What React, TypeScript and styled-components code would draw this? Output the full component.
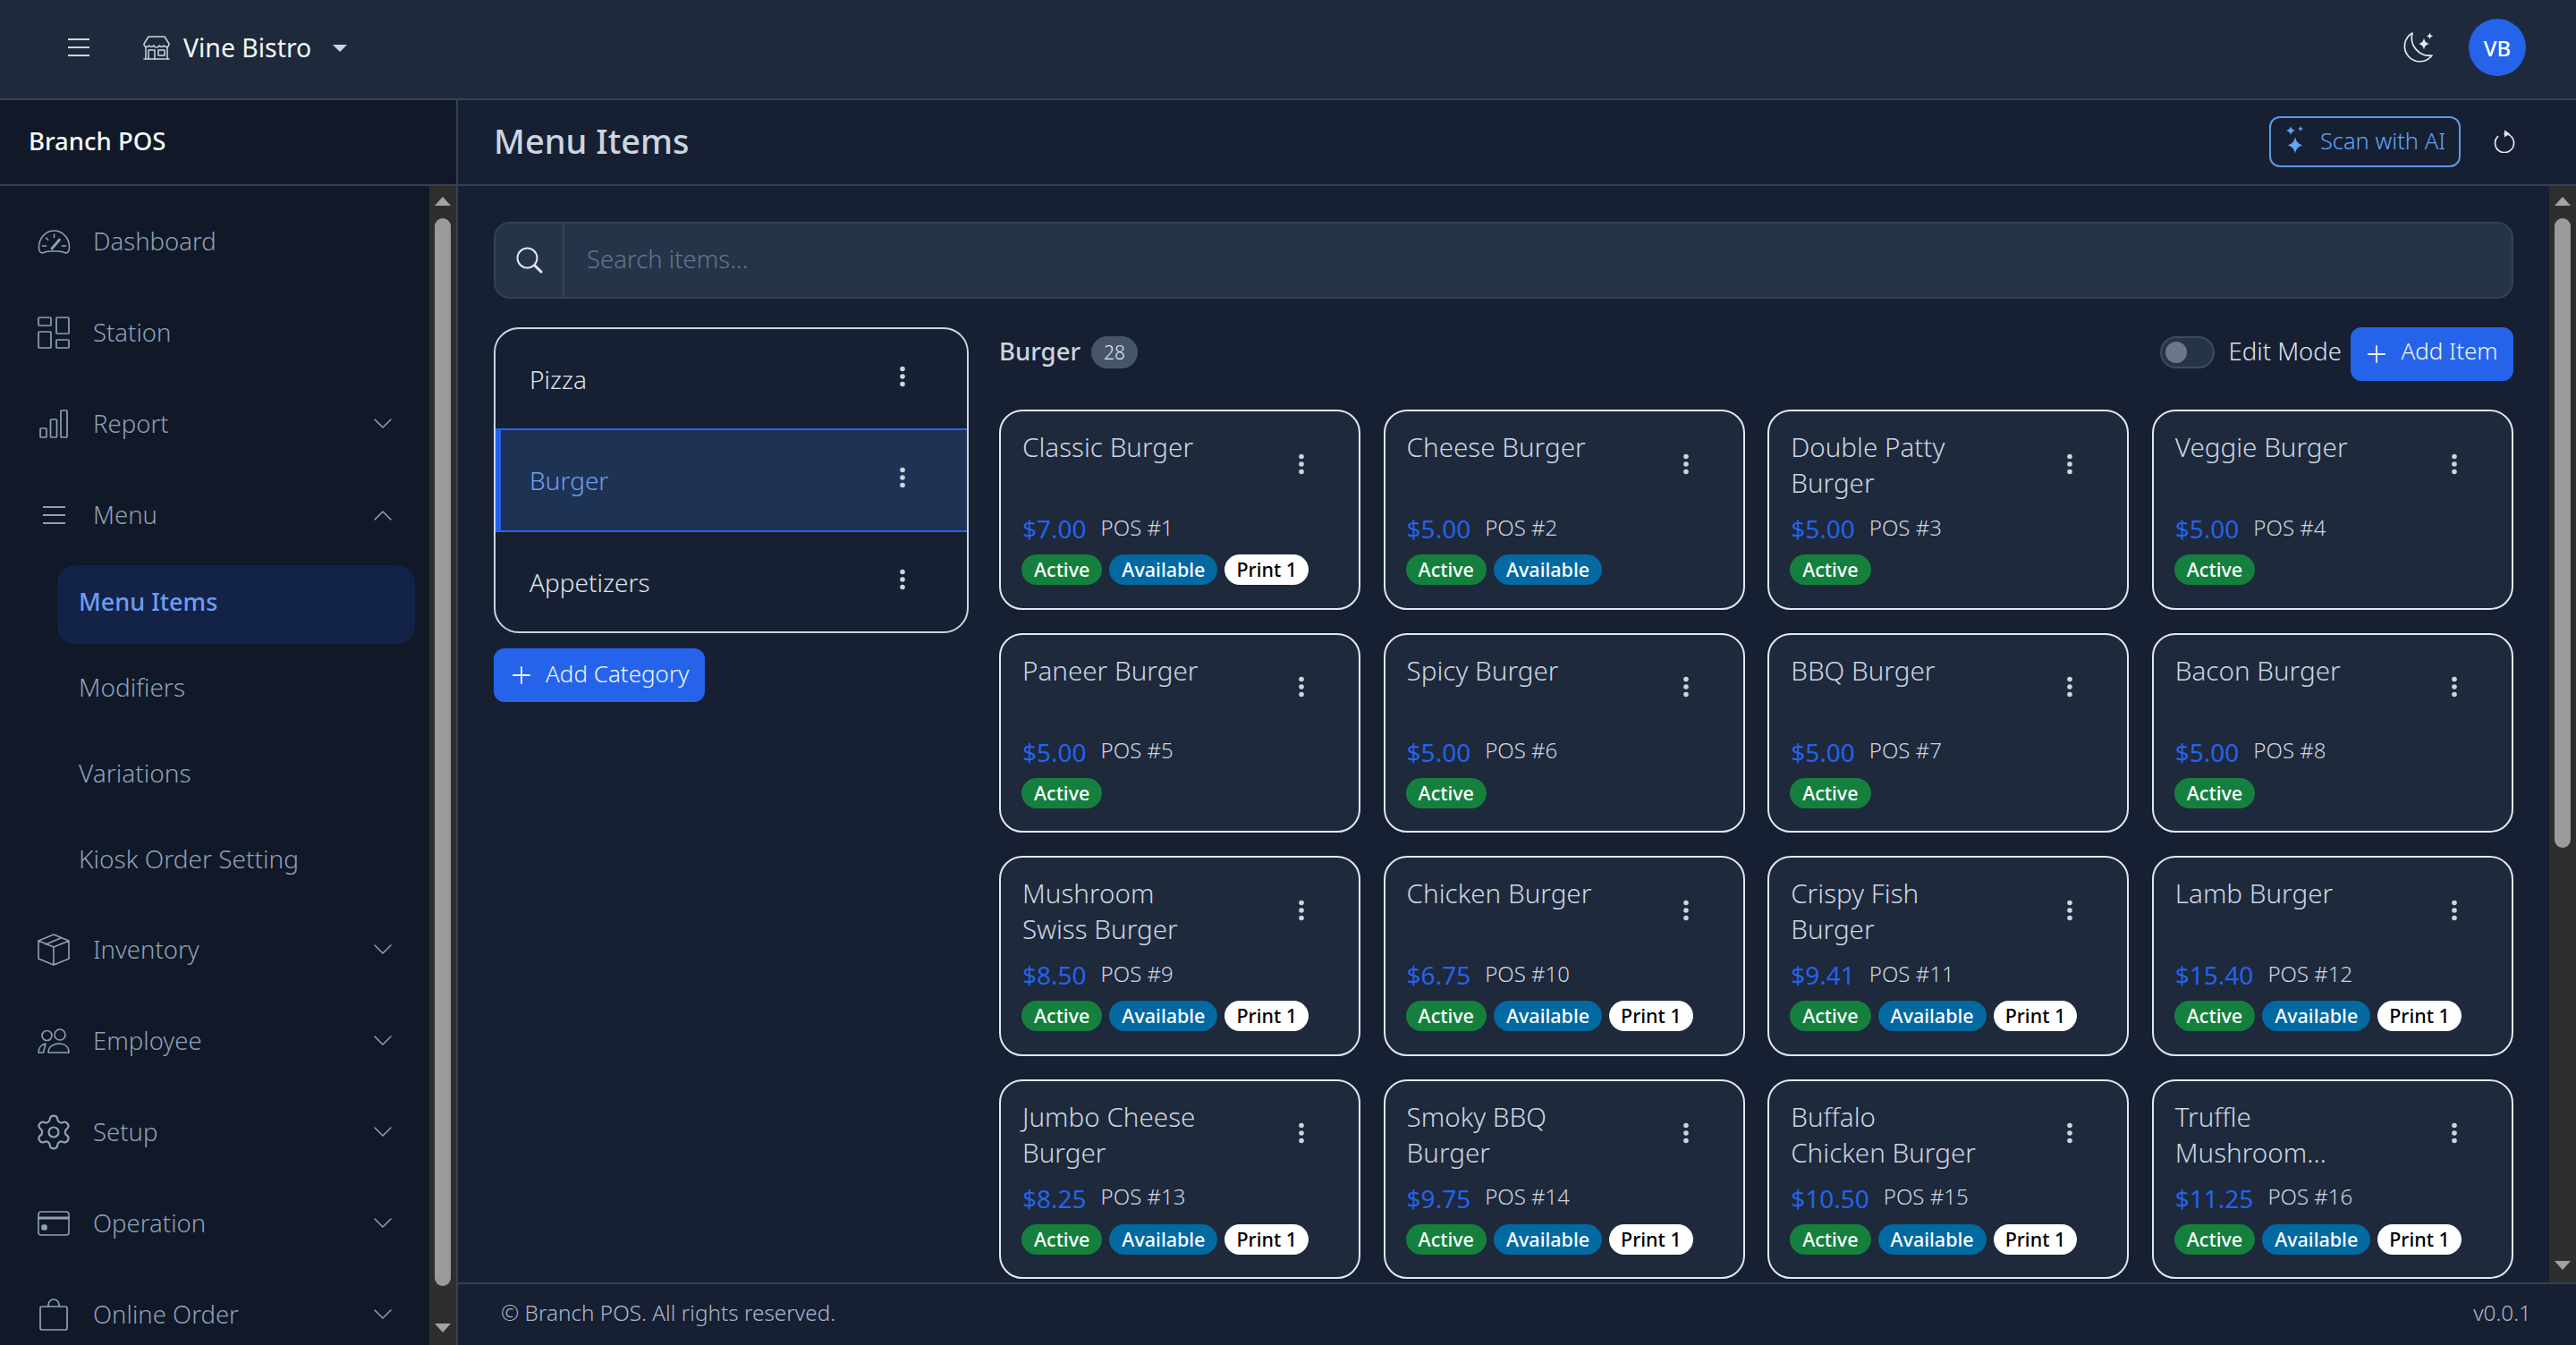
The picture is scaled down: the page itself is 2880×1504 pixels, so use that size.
import React from "react";
import styled, { createGlobalStyle } from "styled-components";
import { Settings } from "lucide-react";

const FONT = `"Noto Sans", "Open Sans", sans-serif`;

const Global = createGlobalStyle`
  html, body { margin: 0; padding: 0; height: 100%; overflow: hidden; background: #172032; }
  * { box-sizing: border-box; }
  body { font-family: ${FONT}; }
`;

const Shell = styled.div`
  width: 2880px; height: 1504px; display: flex; flex-direction: column; overflow: hidden;
  background: #172032;
`;
const TopBar = styled.header`
  height: 112px; flex: none; background: #1e293b; border-bottom: 2px solid #334155;
  display: flex; align-items: center; padding: 0 56px 4px 76px; color: #cbd5e1;
`;
const Brand = styled.div`
  display: flex; align-items: center; margin-left: 60px; gap: 15px; color: #f1f5f9;
  font-size: 28.4px; font-weight: 400; svg { color: #cbd5e1; }
`;
const Caret = styled.span`
  width: 0; height: 0; border-left: 8px solid transparent; border-right: 8px solid transparent;
  border-top: 8px solid #cbd5e1; margin-left: 9px; margin-top: 2px;
`;
const Spacer = styled.div`flex: 1;`;
const MoonWrap = styled.span`color: #e2e8f0; display: block;`;
const Avatar = styled.div`
  width: 64px; height: 64px; border-radius: 50%; background: #2563eb; color: #fff;
  display: flex; align-items: center; justify-content: center; font-size: 24px; font-weight: 500;
  margin-left: 39px;
`;
const Body = styled.div`flex: 1; min-height: 0; display: flex;`;
const Sidebar = styled.aside`
  width: 512px; flex: none; background: #111827; border-right: 2px solid #334155;
  display: flex; flex-direction: column;
`;
const SideHead = styled.div`
  height: 96px; flex: none; border-bottom: 2px solid #334155; display: flex; align-items: center;
  padding: 0 0 4px 32px; color: #f8fafc; font-size: 27.5px; font-weight: 500;
`;
const SideBody = styled.div`flex: 1; min-height: 0; display: flex;`;
const Nav = styled.nav`flex: 1; min-width: 0; overflow: hidden; padding-top: 11px;`;
const NavRow = styled.div`
  height: 102px; display: flex; align-items: center; padding: 0 42px 0 42px; gap: 27px;
  color: #8fa0b7; font-size: 27.5px; font-weight: 300;
`;
const IconBox = styled.span`
  width: 36px; height: 36px; flex: none; display: flex; align-items: center; justify-content: center;
  svg { flex: none; }
`;
const NavLabel = styled.span`flex: 1; margin-left: -1px; padding-bottom: 1px;`;
const SubList = styled.div`
  display: flex; flex-direction: column; gap: 8px; margin: 5px 0 3px 64px; width: 400px;
`;
const SubItem = styled.div<{ $active?: boolean }>`
  height: 88px; display: flex; align-items: center; padding: 0 24px 8px;
  border-radius: 20px; font-size: ${(p) => (p.$active ? 27 : 28)}px;
  font-weight: ${(p) => (p.$active ? 500 : 300)};
  color: ${(p) => (p.$active ? "#6f9cf0" : "#8fa0b7")};
  background: ${(p) => (p.$active ? "#132347" : "transparent")};
`;
const Track = styled.div`
  width: 30px; flex: none; background: #2e2e2e; display: flex; flex-direction: column; align-items: center;
  position: relative; padding: 12px 0 14px;
`;
const ArrowUp = styled.span`
  width: 0; height: 0; border-left: 9px solid transparent; border-right: 9px solid transparent;
  border-bottom: 10px solid #a3a3a3; flex: none;
`;
const ArrowDown = styled(ArrowUp)`
  border-bottom: 0; border-top: 10px solid #a3a3a3; margin-top: auto;
`;
const Thumb = styled.span<{ $h: number }>`
  width: 18px; flex: none; height: ${(p) => p.$h}px; background: #9b9b9b; border-radius: 9px; margin-top: 14px;
`;
const Main = styled.main`flex: 1; min-width: 0; display: flex; flex-direction: column;`;
const PageHead = styled.div`
  height: 96px; flex: none; border-bottom: 2px solid #334155; display: flex; align-items: center;
  padding: 0 64px 0 40px;
`;
const PageTitle = styled.h1`
  margin: 0 0 4px; font-size: 38px; font-weight: 500; color: #cbd5e1; flex: 1;
`;
const ScanButton = styled.button`
  width: 214px; height: 57px; border: 2px solid #5b9be6; border-radius: 12px; background: transparent;
  color: #60a5fa; font: 300 25.5px ${FONT}; display: flex; align-items: center; justify-content: center; gap: 16px;
  padding: 0 0 2px; white-space: nowrap; margin-bottom: 2px;
`;
const IconBtn = styled.span`
  margin-left: 37px; color: #e2e8f0; display: flex; width: 24px; margin-right: 4px; margin-bottom: 2px;
`;
const MainMid = styled.div`flex: 1; min-height: 0; display: flex;`;
const Content = styled.div`flex: 1; min-width: 0; overflow: hidden; padding: 40px 40px 0 40px;`;
const Search = styled.div`
  height: 86px; display: flex; background: #263449; border: 2px solid #334155; border-radius: 18px; overflow: hidden;
  margin-bottom: 32px;
`;
const SearchAddon = styled.div`
  width: 77px; flex: none; border-right: 2px solid #334155; display: flex; align-items: center; justify-content: center;
  color: #e2e8f0;
`;
const SearchInput = styled.input`
  flex: 1; min-width: 0; background: transparent; border: 0; outline: 0; padding: 0 25px 3px;
  color: #e2e8f0; font: 300 27.5px ${FONT};
  &::placeholder { color: #64748b; opacity: 1; }
`;
const Columns = styled.div`display: flex; gap: 34px; align-items: flex-start;`;
const LeftCol = styled.div`width: 531px; flex: none;`;
const CatPanel = styled.div`
  border: 2px solid #cbd5e1; border-radius: 28px; overflow: hidden; margin-bottom: 17px;
`;
const CatRow = styled.div<{ $active?: boolean }>`
  height: ${(p) => (p.$active ? 116 : 111)}px; display: flex; align-items: center; justify-content: space-between;
  padding: 0 68px 0 ${(p) => (p.$active ? 32 : 38)}px; font-size: 28px; font-weight: 300;
  color: ${(p) => (p.$active ? "#6f9cf0" : "#dbe3ee")};
  background: ${(p) => (p.$active ? "#1e3354" : "transparent")};
  border: ${(p) => (p.$active ? "2px solid #2563eb" : "0")};
  border-left: ${(p) => (p.$active ? "6px solid #2563eb" : "0")};
  border-right: 0;
`;
const BlueButton = styled.button`
  height: 60px; border: 0; border-radius: 12px; background: #2563eb; color: #f1f5f9;
  font: 300 26px ${FONT}; display: inline-flex; align-items: center; gap: 17px; padding: 0 18px 5px 21px; white-space: nowrap;
  svg { margin-top: 5px; }
`;
const RightCol = styled.div`flex: 1; min-width: 0;`;
const ListHead = styled.div`
  height: 60px; display: flex; align-items: center; margin-bottom: 32px;
`;
const ListTitle = styled.span`font-size: 27.5px; font-weight: 500; color: #cbd5e1; padding-bottom: 7px;`;
const Count = styled.span`
  margin: 0 0 5px 12px; height: 36px; width: 52px; border-radius: 18px; background: #475569; color: #e2e8f0;
  display: flex; align-items: center; justify-content: center; font-size: 21px; font-weight: 300;
`;
const Toggle = styled.span`
  width: 61px; height: 36px; border-radius: 18px; background: #263449; border: 2px solid #3d4b60; padding: 4px;
  display: flex; margin-bottom: 4px;
`;
const Knob = styled.span`width: 24px; height: 24px; border-radius: 50%; background: #6b7686;`;
const EditLabel = styled.span`
  margin: 0 10px 0 16px; font-size: 27.5px; font-weight: 300; color: #dbe3ee; padding-bottom: 7px;
`;
const HeadButton = styled(BlueButton)`
  width: 182px; justify-content: center; padding: 0 0 8px 2px;
  svg { margin-top: 8px; }
`;
const Grid = styled.div`display: grid; grid-template-columns: repeat(4, 404px); grid-auto-rows: 223.5px; column-gap: 25.6px; row-gap: 26px;`;
const Card = styled.article`
  border: 2px solid #e2e8f0; border-radius: 26px; background: #1e293b; padding: 20px 24px 0 24px;
  display: flex; flex-direction: column;
`;
const CardTop = styled.div`height: 80px; margin-bottom: 2px; display: flex; align-items: center; justify-content: space-between; padding-right: 36px;`;
const CardName = styled.div`
  align-self: flex-start; font-size: 29.6px; line-height: 40px; font-weight: 300; color: #cbd5e1; white-space: pre-line;
`;
const PriceRow = styled.div`height: 40px; margin-top: 9px; display: flex; align-items: center; gap: 16px;`;
const Price = styled.span`font-size: 28px; color: #2563eb;`;
const PosNo = styled.span`font-size: 24px; font-weight: 300; color: #cbd5e1; margin-bottom: 4px;`;
const Badges = styled.div`display: flex; gap: 8px; margin-top: 9px; margin-left: -1px;`;
const tones = {
  active: "background:#15803d;color:#fff;padding:0 14px 1px;",
  available: "background:#0369a1;color:#fff;padding:0 14px 1px;",
  print: "background:#fff;color:#000;padding:0 13px 1px;",
};
const Badge = styled.span<{ $tone: keyof typeof tones }>`
  height: 34px; border-radius: 17px; display: flex; align-items: center;
  font-size: 21.5px; font-weight: 500; ${(p) => tones[p.$tone]}
`;
const Footer = styled.footer`
  height: 70px; flex: none; border-top: 2px solid #334155; display: flex; align-items: center; justify-content: space-between;
  padding: 0 50px 5px 48px; color: #aab8cc; font-size: 24.3px; font-weight: 300;
`;
const Ico = styled.svg`fill: none; stroke: currentColor; stroke-linecap: round; stroke-linejoin: round; display: block; flex: none;`;
const FillIco = styled.svg`fill: currentColor; display: block; flex: none;`;
const DotsWrap = styled.span<{ $up?: number }>`
  color: #cbd5e1; display: block; width: 8px; margin-top: ${(p) => -(p.$up ?? 6)}px;
`;

const Dots = ({ up }: { up?: number }) => (
  <DotsWrap $up={up}>
    <FillIco width="8" height="24" viewBox="0 0 8 24">
      <circle cx="4" cy="3.5" r="2.8" /><circle cx="4" cy="12" r="2.8" /><circle cx="4" cy="20.5" r="2.8" />
    </FillIco>
  </DotsWrap>
);
const Plus = () => (
  <Ico width="20" height="20" viewBox="0 0 22 22" strokeWidth="2"><path d="M11 1v20M1 11h20" /></Ico>
);
const Burger = ({ w = 24 }: { w?: number }) => (
  <Ico width={w} height="22" viewBox={`0 0 ${w} 22`} strokeWidth="1.8" strokeLinecap="butt"><path d={`M0 2h${w}M0 11h${w}M0 20h${w}`} /></Ico>
);
const Chevron = ({ up }: { up?: boolean }) => (
  <Ico width="20" height="12" viewBox="0 0 20 12" strokeWidth="1.5">
    <path d={up ? "M1 11 10 2l9 9" : "M1 1l9 9 9-9"} />
  </Ico>
);
const StoreIcon = () => (
  <Ico width="30" height="28" viewBox="0 0 30 28" strokeWidth="1.5">
    <path d="M6 2h18l5 8a3 3 0 0 1-5.6 1.8 3 3 0 0 1-5.2 0 3.4 3.4 0 0 1-6.4 0 3 3 0 0 1-5.2 0A3 3 0 0 1 1 10zM3 14v13h24V14M1 27h28" />
    <path d="M6 27V17h7v10M17 17h7v6h-7z" />
  </Ico>
);
const GaugeIcon = () => (
  <Ico width="37" height="27" viewBox="0 0 36 27" strokeWidth="1.6">
    <path d="M5 26C2 26 1 23 1 19 1 9 9 1 18 1s17 8 17 18c0 4-1 7-4 7-6-3-20-3-26 0z" />
    <path d="M18 5v3.500M9 9l2.200 2.200M5 18h4M27 18h4" />
    <path d="M15.500 21 24 11" strokeWidth="2.800" />
  </Ico>
);
const GridIcon = () => (
  <Ico width="36" height="36" viewBox="0 0 36 36" strokeWidth="1.7">
    <rect x="1" y="1" width="14" height="9" rx="1" /><rect x="21" y="1" width="14" height="18" rx="1" />
    <rect x="1" y="17" width="14" height="18" rx="1" /><rect x="21" y="26" width="14" height="9" rx="1" />
  </Ico>
);
const BarsIcon = () => (
  <Ico width="32" height="32" viewBox="0 0 32 32" strokeWidth="1.7">
    <rect x="1" y="21" width="7" height="10" rx="1" /><rect x="12.5" y="11" width="7" height="20" rx="1" />
    <rect x="24" y="1" width="7" height="30" rx="1" />
  </Ico>
);
const BoxIcon = () => (
  <Ico width="36" height="36" viewBox="0 0 36 36" strokeWidth="1.6">
    <path d="M18 1 35 8v20l-17 7-17-7V8zM1 8l17 7 17-7M18 15v20M9 12l17-7" />
  </Ico>
);
const PeopleIcon = () => (
  <Ico width="36" height="28" viewBox="0 0 36 28" strokeWidth="1.6">
    <circle cx="10.5" cy="8" r="5.5" /><circle cx="25" cy="7" r="6" />
    <path d="M1 27c0-5 3-9 8-10l-2.500 10zM12 27c0-6 5-10 12-10s11 4 11 10z" />
  </Ico>
);
const CardIcon = () => (
  <Ico width="36" height="28" viewBox="0 0 36 28" strokeWidth="1.6">
    <rect x="1" y="1" width="34" height="26" rx="3" /><path d="M1 8h34" strokeWidth="3" />
    <rect x="5" y="16" width="5" height="5" rx="1.500" fill="currentColor" />
  </Ico>
);
const BagIcon = () => (
  <Ico width="32" height="36" viewBox="0 0 32 36" strokeWidth="1.7">
    <rect x="1" y="9" width="30" height="26" rx="2" /><path d="M10 9V7a6 6 0 0 1 12 0v2" />
  </Ico>
);
const MoonIcon = () => (
  <MoonWrap>
    <svg width="36" height="36" viewBox="0 0 36 36" style={{ display: "block" }}>
      <path d="M12 2A17 17 0 1 0 34 27 20 20 0 0 1 12 2z" fill="none" stroke="currentColor" strokeWidth="1.700" strokeLinejoin="round" />
      <path d="M25 7.500c.9 4 2.400 5.600 6.500 6.500-4.100.9-5.600 2.500-6.500 6.500-.9-4-2.400-5.600-6.500-6.500 4.100-.9 5.600-2.500 6.500-6.500zM31.500 1.500c.5 2.300 1.400 3.300 3.800 3.800-2.400.5-3.300 1.500-3.800 3.800-.5-2.300-1.400-3.300-3.800-3.800 2.400-.5 3.300-1.500 3.800-3.800z" fill="currentColor" />
    </svg>
  </MoonWrap>
);
const SparkIcon = () => (
  <FillIco width="24" height="32" viewBox="0 0 24 32">
    <path d="M7 0c.7 3 2 4.300 5 5-3 .7-4.300 2-5 5-.7-3-2-4.300-5-5 3-.7 4.300-2 5-5zM18 0c.4 1.600 1 2.300 3 3-2 .5-2.600 1.400-3 3-.4-1.600-1-2.500-3-3 2-.7 2.600-1.400 3-3zM12 12c1 5 3 7.500 8.500 9.500C15 23 13 25.500 12 31c-1-5.500-3-8-8.500-9.500C9 19.500 11 17 12 12z" />
  </FillIco>
);
const RefreshIcon = () => (
  <Ico width="24" height="26" viewBox="0 0 24 26" strokeWidth="1.700">
    <path d="M12 4.500A10.500 10.500 0 1 1 4.500 7.700" />
    <path d="M12 .5l6 4-6 4z" fill="currentColor" stroke="none" />
  </Ico>
);
const SearchIcon = () => (
  <Ico width="30" height="30" viewBox="0 0 30 30" strokeWidth="2">
    <circle cx="12.500" cy="12.500" r="11" /><path d="M21 21l7 7" strokeWidth="3" />
  </Ico>
);

type Tone = keyof typeof tones;
const ALL: Tone[] = ["active", "available", "print"];
const items: { name: string; price: string; tags: Tone[] }[] = [
  { name: "Classic Burger", price: "$7.00", tags: ALL },
  { name: "Cheese Burger", price: "$5.00", tags: ["active", "available"] },
  { name: "Double Patty\nBurger", price: "$5.00", tags: ["active"] },
  { name: "Veggie Burger", price: "$5.00", tags: ["active"] },
  { name: "Paneer Burger", price: "$5.00", tags: ["active"] },
  { name: "Spicy Burger", price: "$5.00", tags: ["active"] },
  { name: "BBQ Burger", price: "$5.00", tags: ["active"] },
  { name: "Bacon Burger", price: "$5.00", tags: ["active"] },
  { name: "Mushroom\nSwiss Burger", price: "$8.50", tags: ALL },
  { name: "Chicken Burger", price: "$6.75", tags: ALL },
  { name: "Crispy Fish\nBurger", price: "$9.41", tags: ALL },
  { name: "Lamb Burger", price: "$15.40", tags: ALL },
  { name: "Jumbo Cheese\nBurger", price: "$8.25", tags: ALL },
  { name: "Smoky BBQ\nBurger", price: "$9.75", tags: ALL },
  { name: "Buffalo\nChicken Burger", price: "$10.50", tags: ALL },
  { name: "Truffle\nMushroom…", price: "$11.25", tags: ALL },
];
const toneLabel: Record<Tone, string> = { active: "Active", available: "Available", print: "Print 1" };

const Row = ({ icon, label, chev }: { icon: React.ReactNode; label: string; chev?: "up" | "down" }) => (
  <NavRow>
    <IconBox>{icon}</IconBox>
    <NavLabel>{label}</NavLabel>
    {chev && <Chevron up={chev === "up"} />}
  </NavRow>
);

export default function App() {
  return (
    <Shell>
      <Global />
      <TopBar>
        <Burger />
        <Brand><StoreIcon />Vine Bistro<Caret /></Brand>
        <Spacer />
        <MoonIcon />
        <Avatar>VB</Avatar>
      </TopBar>
      <Body>
        <Sidebar>
          <SideHead>Branch POS</SideHead>
          <SideBody>
            <Nav>
              <Row icon={<GaugeIcon />} label="Dashboard" />
              <Row icon={<GridIcon />} label="Station" />
              <Row icon={<BarsIcon />} label="Report" chev="down" />
              <Row icon={<Burger w={25} />} label="Menu" chev="up" />
              <SubList>
                <SubItem $active>Menu Items</SubItem>
                <SubItem>Modifiers</SubItem>
                <SubItem>Variations</SubItem>
                <SubItem>Kiosk Order Setting</SubItem>
              </SubList>
              <Row icon={<BoxIcon />} label="Inventory" chev="down" />
              <Row icon={<PeopleIcon />} label="Employee" chev="down" />
              <Row icon={<Settings size={44} strokeWidth={1.2} />} label="Setup" chev="down" />
              <Row icon={<CardIcon />} label="Operation" chev="down" />
              <Row icon={<BagIcon />} label="Online Order" chev="down" />
            </Nav>
            <Track><ArrowUp /><Thumb $h={1194} /><ArrowDown /></Track>
          </SideBody>
        </Sidebar>
        <Main>
          <PageHead>
            <PageTitle>Menu Items</PageTitle>
            <ScanButton><SparkIcon />Scan with AI</ScanButton>
            <IconBtn><RefreshIcon /></IconBtn>
          </PageHead>
          <MainMid>
            <Content>
              <Search>
                <SearchAddon><SearchIcon /></SearchAddon>
                <SearchInput placeholder="Search items..." readOnly />
              </Search>
              <Columns>
                <LeftCol>
                  <CatPanel>
                    <CatRow>Pizza<Dots /></CatRow>
                    <CatRow $active>Burger<Dots /></CatRow>
                    <CatRow>Appetizers<Dots /></CatRow>
                  </CatPanel>
                  <BlueButton><Plus />Add Category</BlueButton>
                </LeftCol>
                <RightCol>
                  <ListHead>
                    <ListTitle>Burger</ListTitle>
                    <Count>28</Count>
                    <Spacer />
                    <Toggle><Knob /></Toggle>
                    <EditLabel>Edit Mode</EditLabel>
                    <HeadButton><Plus />Add Item</HeadButton>
                  </ListHead>
                  <Grid>
                    {items.map((it, i) => (
                      <Card key={it.name}>
                        <CardTop>
                          <CardName>{it.name}</CardName>
                          <Dots up={3} />
                        </CardTop>
                        <PriceRow>
                          <Price>{it.price}</Price>
                          <PosNo>POS #{i + 1}</PosNo>
                        </PriceRow>
                        <Badges>
                          {it.tags.map((t) => <Badge key={t} $tone={t}>{toneLabel[t]}</Badge>)}
                        </Badges>
                      </Card>
                    ))}
                  </Grid>
                </RightCol>
              </Columns>
            </Content>
            <Track><ArrowUp /><Thumb $h={704} /><ArrowDown /></Track>
          </MainMid>
          <Footer>
            <span>© Branch POS. All rights reserved.</span>
            <span>v0.0.1</span>
          </Footer>
        </Main>
      </Body>
    </Shell>
  );
}
